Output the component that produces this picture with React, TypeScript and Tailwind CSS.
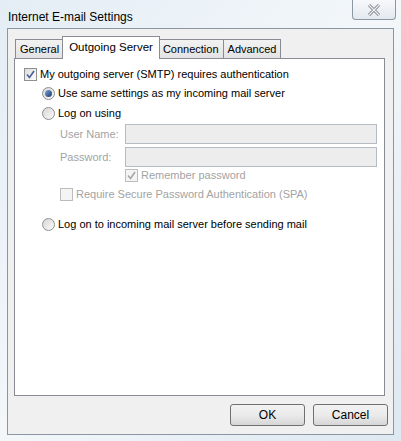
import React from "react";

const font = { fontFamily: '"Liberation Sans", Arial, sans-serif' };

function Check({ checked, disabled }: { checked?: boolean; disabled?: boolean }) {
  return (
    <span
      className={`flex h-[13px] w-[13px] shrink-0 items-center justify-center border ${
        disabled ? "border-[#bcbcbc] bg-[#f4f4f4]" : "border-[#8e8f8f] bg-gradient-to-br from-[#dcdcdc] to-[#ffffff]"
      }`}
    >
      {checked && (
        <svg width="9" height="9" viewBox="0 0 9 9">
          <path
            d="M1 4.5 L3.5 7.5 L8 1"
            fill="none"
            stroke={disabled ? "#a6a6a6" : "#4a5f97"}
            strokeWidth="1.6"
          />
        </svg>
      )}
    </span>
  );
}

function Radio({ checked }: { checked?: boolean }) {
  return (
    <span className="flex h-[13px] w-[13px] shrink-0 items-center justify-center rounded-full border border-[#8e8f8f] bg-gradient-to-br from-[#d6d6d6] to-[#fbfbfb]">
      {checked && (
        <span className="h-[7px] w-[7px] rounded-full bg-gradient-to-br from-[#7fa7d9] to-[#16386b]" />
      )}
    </span>
  );
}

function Tab({ label, active }: { label: string; active?: boolean }) {
  if (active)
    return (
      <div className="relative z-10 -mx-[2px] -mb-px flex h-[23px] items-center border border-b-0 border-[#898c95] bg-white px-[6px] text-[11.5px] text-black">
        {label}
      </div>
    );
  return (
    <div className="mt-[3px] flex h-[19px] items-center border border-b-0 border-[#898c95] bg-gradient-to-b from-[#f2f2f2] to-[#e3e3e3] px-[4px] text-[11px] text-black">
      {label}
    </div>
  );
}

function Button({ label }: { label: string }) {
  return (
    <div className="flex h-[22px] w-[75px] items-center justify-center rounded-[3px] border border-[#707070] bg-gradient-to-b from-[#f2f2f2] via-[#ebebeb] to-[#d6d6d6] text-[12px] text-black">
      {label}
    </div>
  );
}

export default function App() {
  return (
    <div
      style={font}
      className="flex h-[441px] w-[401px] flex-col overflow-hidden bg-gradient-to-br from-[#e4edf5] via-[#f3f7fa] to-[#dde8f1] px-[7px] pb-[6px]"
    >
      {/* title bar */}
      <div className="flex h-[28px] shrink-0 items-start justify-between">
        <span className="mt-[8px] pl-[1px] text-[12px] text-black">Internet E-mail Settings</span>
        <div className="-mr-[2px] flex h-[20px] w-[44px] items-center justify-center rounded-b-[4px] border border-t-0 border-[#8b97a5] bg-gradient-to-b from-[#f7f9fb] to-[#e3e9ef]">
          <svg width="14" height="12" viewBox="0 0 14 12">
            <path d="M2 1 L12 11 M12 1 L2 11" stroke="#7b828c" strokeWidth="3" />
            <path d="M2 1 L12 11 M12 1 L2 11" stroke="#f4f4f4" strokeWidth="1.2" />
          </svg>
        </div>
      </div>

      {/* client area */}
      <div className="flex flex-1 flex-col border border-[#8a96a2] bg-[#f0f0f0] pl-[6px] pr-[8px] pt-[7px]">
        <div className="flex items-end pl-[1px]">
          <Tab label="General" />
          <Tab label="Outgoing Server" active />
          <Tab label="Connection" />
          <div className="-ml-px">
            <Tab label="Advanced" />
          </div>
        </div>
        <div className="flex h-[338px] flex-col border border-[#898c95] bg-white pl-[9px] pr-[7px] pt-[8px] text-[11px] text-black">
          <div className="flex h-[15px] items-center gap-[3px]">
            <Check checked />
            <span>My outgoing server (SMTP) requires authentication</span>
          </div>
          <div className="ml-[18px] mt-[4px] flex h-[15px] items-center gap-[3px]">
            <Radio checked />
            <span>Use same settings as my incoming mail server</span>
          </div>
          <div className="ml-[18px] mt-[5px] flex h-[15px] items-center gap-[3px]">
            <Radio />
            <span>Log on using</span>
          </div>
          <div className="ml-[36px] mt-[3px] flex h-[20px] items-center text-[#a3a3a3]">
            <span className="w-[65px] whitespace-nowrap">User Name:</span>
            <div className="h-[20px] flex-1 border border-[#b6bcc6] bg-[#ededed]" />
          </div>
          <div className="ml-[36px] mt-[3px] flex h-[20px] items-center text-[#a3a3a3]">
            <span className="w-[65px] whitespace-nowrap">Password:</span>
            <div className="h-[20px] flex-1 border border-[#b6bcc6] bg-[#ededed]" />
          </div>
          <div className="ml-[101px] mt-[1px] flex h-[15px] items-center gap-[3px] text-[#a3a3a3]">
            <Check checked disabled />
            <span>Remember password</span>
          </div>
          <div className="ml-[36px] mt-[4px] flex h-[15px] items-center gap-[3px] text-[#a3a3a3]">
            <Check disabled />
            <span>Require Secure Password Authentication (SPA)</span>
          </div>
          <div className="ml-[18px] mt-[15px] flex h-[15px] items-center gap-[3px]">
            <Radio />
            <span>Log on to incoming mail server before sending mail</span>
          </div>
        </div>
        <div className="-mr-[3px] mt-[8px] flex justify-end gap-[8px]">
          <Button label="OK" />
          <Button label="Cancel" />
        </div>
      </div>
    </div>
  );
}
